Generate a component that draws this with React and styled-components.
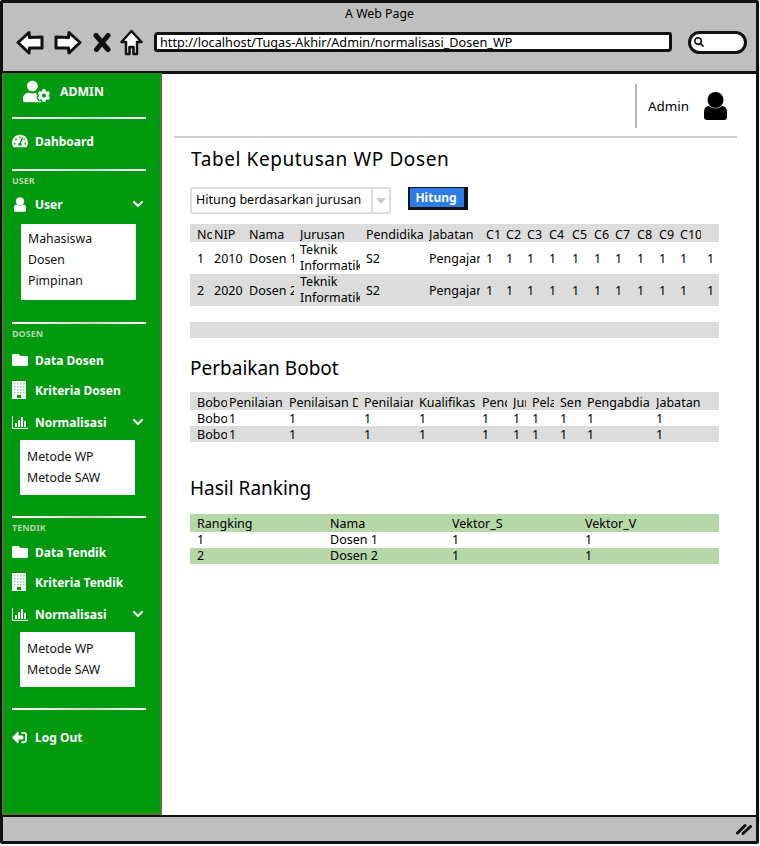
import React from 'react';
import styled, { createGlobalStyle } from 'styled-components';
import { FaUserCog, FaTachometerAlt, FaFolder, FaSignOutAlt, FaSearch } from 'react-icons/fa';
import { ChevronDown } from 'lucide-react';

const Global = createGlobalStyle`
  html, body { margin: 0; padding: 0; background: #fff; }
  body { font-family: "Noto Sans", "Liberation Sans", sans-serif; color: #000; }
  * { box-sizing: border-box; }
`;

const Frame = styled.div`
  width: 759px;
  height: 844px;
  border: 3px solid #111;
  border-radius: 2px;
  display: flex;
  flex-direction: column;
  background: #fff;
`;

const TopBar = styled.header`
  height: 71px;
  flex: none;
  background: #bfbfbf;
  border-bottom: 3px solid #111;
  display: flex;
  flex-direction: column;
  align-items: stretch;
`;

const PageTitle = styled.div`
  height: 21px;
  padding-top: 2px;
  text-align: center;
  font-size: 12.3px;
  line-height: 17px;
`;

const AddressRow = styled.div`
  display: flex;
  align-items: center;
  height: 36px;
  padding-left: 13px;
`;

const NavIcons = styled.div`
  display: flex;
  align-items: center;
  width: 138px;
  flex: none;
`;

const UrlBox = styled.div`
  width: 518px;
  height: 20px;
  border: 3px solid #111;
  border-radius: 4px 3px 4px 3px;
  background: #fff;
  font-size: 12.7px;
  line-height: 14px;
  padding-left: 3px;
  overflow: hidden;
  white-space: nowrap;
`;

const SearchBox = styled.div`
  width: 59px;
  height: 23px;
  margin-left: 16px;
  border: 3px solid #111;
  border-radius: 14px;
  background: #fff;
  display: flex;
  align-items: center;
  padding-left: 3px;
  font-size: 10px;
`;

const Body = styled.div`
  flex: 1;
  display: flex;
  min-height: 0;
`;

const Sidebar = styled.aside`
  width: 160px;
  height: 742px;
  margin: -1px 0 0 -1px;
  flex: none;
  background: #00990f;
  border: 2px solid #4a7d2a;
  border-top-color: #1c8a1c;
  display: flex;
  flex-direction: column;
`;

const Brand = styled.div`
  height: 42px;
  padding: 0 0 10px 19px;
  display: flex;
  align-items: center;
  gap: 10px;
  color: #fff;
  font-weight: 700;
  font-size: 12.3px;
`;

const Sep = styled.div`
  height: 2px;
  width: 134px;
  margin: ${p => p.$mt || 0}px 0 0 8px;
  background: linear-gradient(90deg, #fff, #cfd8cc 60%, #fff);
`;

const SideLabel = styled.div`
  height: 12px;
  margin: 4px 0 0 8px;
  font-size: 9px;
  line-height: 12px;
  font-weight: 700;
  color: #b6d7a8;
`;

const NavRow = styled.div`
  height: 30px;
  margin-top: ${p => p.$mt || 0}px;
  padding-left: 8px;
  display: flex;
  align-items: center;
  color: #fff;
  font-weight: 700;
  font-size: 12px;
  position: relative;
`;

const NavIcon = styled.span`
  width: 23px;
  flex: none;
  display: flex;
  align-items: center;
`;

const PersonSlot = styled.span`
  display: flex;
  margin-left: 2px;
`;

const Chevron = styled.span`
  position: absolute;
  left: 126px;
  top: 7px;
  display: flex;
`;

const SubMenu = styled.div`
  width: 115px;
  height: ${p => p.$h}px;
  margin: ${p => p.$mt}px 0 0 ${p => p.$ml}px;
  padding-top: ${p => p.$pt}px;
  background: #fff;
  border-radius: 1px;
`;

const SubItem = styled.div`
  height: 21px;
  padding-left: 7px;
  font-size: 12.3px;
  line-height: 21px;
  color: #111;
`;

const Main = styled.main`
  flex: 1;
  min-width: 0;
`;

const TopNav = styled.div`
  height: 61px;
  display: flex;
  justify-content: flex-end;
  align-items: center;
  padding: 2px 29px 0 0;
`;

const VLine = styled.div`
  width: 2px;
  height: 44px;
  margin-right: 11px;
  background: #b5b5b5;
`;

const AdminName = styled.span`
  font-size: 13.4px;
  margin-right: 15px;
`;

const Rule = styled.div`
  height: 2px;
  margin: 1px 19px 0 12px;
  background: #cfcfcf;
`;

const Content = styled.div`
  padding-left: 28px;
  width: 557px;
`;

const Heading = styled.h2`
  margin: ${p => p.$mt}px 0 0 ${p => p.$ml || 0}px;
  height: 24px;
  font-size: 19px;
  letter-spacing: ${p => p.$ls || 0}px;
  line-height: 24px;
  font-weight: 400;
`;

const Toolbar = styled.div`
  margin-top: 16px;
  display: flex;
  align-items: flex-start;
`;

const SelectBox = styled.div`
  width: 201px;
  height: 27px;
  border: 2px solid #ddd;
  border-radius: 2px;
  display: flex;
  font-size: 12.5px;
`;

const SelectText = styled.div`
  flex: 1;
  line-height: 21px;
  padding-left: 4px;
  border-right: 2px solid #ddd;
  white-space: nowrap;
  overflow: hidden;
`;

const SelectArrow = styled.div`
  width: 16px;
  display: flex;
  align-items: center;
  justify-content: center;
  &::after {
    content: '';
    border: 5px solid transparent;
    border-top: 6px solid #ccc;
    border-bottom: 0;
  }
`;

const HitungBtn = styled.button`
  margin-left: 17px;
  width: 60px;
  height: 23px;
  padding: 0 2px 0 0;
  background: #2b7ce4;
  color: #fff;
  border: 2px solid #111;
  border-top-width: 1px;
  border-right-width: 4px;
  border-bottom-width: 3px;
  font: 700 12px "Noto Sans", "Liberation Sans", sans-serif;
`;

const Table = styled.div`
  width: 529px;
  margin-top: ${p => p.$mt}px;
  font-size: 12.5px;
`;

const Row = styled.div`
  display: grid;
  grid-template-columns: ${p => p.$cols};
  padding: ${p => p.$pt || 0}px 0 0 7px;
  height: ${p => p.$h}px;
  align-items: center;
  background: ${p => p.$bg || 'transparent'};
`;

const Cell = styled.div`
  margin-right: ${p => p.$mr ?? 6}px;
  overflow: hidden;
  white-space: nowrap;
  line-height: ${p => p.$lh || 18}px;
  height: 16px;
`;

const WrapCell = styled(Cell)`
  white-space: normal;
  line-height: 16px;
  height: 32px;
  word-break: keep-all;
`;

const Clip = styled.span`
  display: block;
  overflow: hidden;
`;

const BottomBar = styled.footer`
  height: 26px;
  flex: none;
  margin-top: 2px;
  background: #bfbfbf;
  border-top: 2px solid #111;
  display: flex;
  justify-content: flex-end;
  align-items: center;
  padding-right: 4px;
`;

const BackIcon = ({ flip }) => (
  <svg width="29" height="25" viewBox="0 0 29 25" style={{ marginRight: flip ? 11 : 8, transform: flip ? 'scaleX(-1)' : 'none' }}>
    <path d="M2 12.5 L13 2.5 L13.5 7.5 L26 7 L26 18 L13.5 18 L13 23 Z" fill="#fff" stroke="#111" strokeWidth="3" strokeLinejoin="round" />
  </svg>
);

const CloseIcon = () => (
  <svg width="18" height="19" viewBox="0 0 18 19" style={{ marginRight: 9 }}>
    <path d="M3 2.5 L15 16.5 M15 2.5 L3.5 16.5" stroke="#111" strokeWidth="5" strokeLinecap="round" />
  </svg>
);

const HomeIcon = () => (
  <svg width="23" height="27" viewBox="0 0 23 27">
    <path d="M11.5 2 L21.5 13 L17 13 L17 25 L13.5 25 L13.5 18 L9.5 18 L9.5 25 L6 25 L6 13 L1.5 13 Z" fill="#fff" stroke="#111" strokeWidth="2.5" strokeLinejoin="round" />
  </svg>
);

const ResizeIcon = () => (
  <svg width="16" height="12" viewBox="0 0 16 12">
    <path d="M1.5 10 L9 2.5 M7 10.5 L14.5 3.5" stroke="#111" strokeWidth="3" strokeLinecap="round" />
  </svg>
);

const PersonIcon = ({ w, h, color }) => (
  <svg width={w} height={h} viewBox="0 0 23 28" fill={color}>
    <circle cx="11.5" cy="8" r="8" />
    <path d="M0 20 Q0 14.5 5 14 Q11.5 19 18 14 Q23 14.5 23 20 L23 25 Q23 28 20 28 L3 28 Q0 28 0 25 Z" />
  </svg>
);

const BuildingIcon = () => (
  <svg width="14" height="18" viewBox="0 0 14 18">
    <rect width="14" height="18" fill="#fff" />
    {[2, 5, 8, 11].map(x => [2, 5, 8, 11].map(y => (
      <rect key={`${x}-${y}`} x={x} y={y} width="1.6" height="1.6" fill="#9ed39f" />
    )))}
    <rect x="5" y="14" width="4" height="3" fill="#00990f" />
  </svg>
);

const BarsIcon = () => (
  <svg width="16" height="13" viewBox="0 0 16 13" fill="#fff">
    <rect x="0" y="0" width="1" height="13" />
    <rect x="0" y="12" width="16" height="1" />
    <rect x="3" y="7" width="2" height="4" />
    <rect x="6" y="4" width="2" height="7" />
    <rect x="9" y="1" width="2" height="10" />
    <rect x="12" y="5" width="2" height="6" />
  </svg>
);

const Side = ({ icon, children, mt, open }) => (
  <NavRow $mt={mt}>
    <NavIcon>{icon}</NavIcon>
    {children}
    {open && <Chevron><ChevronDown size={16} strokeWidth={3} color="#fff" /></Chevron>}
  </NavRow>
);

const cols1 = '17px 35px 51px 66px 63px 57px 20px 21px 22px 23px 22px 21px 22px 22px 21px 27px 1fr';
const cols2 = '32px 60px 75px 55px 63px 31px 19px 28px 27px 69px 1fr';
const cols3 = '133px 122px 133px 1fr';
const GRAY = '#dcdcdc';
const GREEN = '#b6d7a8';

const heads1 = ['No', 'NIP', 'Nama', 'Jurusan', 'Pendidikan', 'Jabatan', 'C1', 'C2', 'C3', 'C4', 'C5', 'C6', 'C7', 'C8', 'C9', 'C10', ''];
const heads2 = ['Bobot', 'Penilaian', 'Penilaisan Dosen', 'Penilaian', 'Kualifikasi', 'Pendidikan', 'Jurnal', 'Pelatihan', 'Seminar', 'Pengabdian', 'Jabatan'];
const heads3 = ['Rangking', 'Nama', 'Vektor_S', 'Vektor_V'];
const ones = Array.from({ length: 11 }, () => '1');

const DosenRow = ({ no, nip, nama, jabatan, bg }) => (
  <Row $cols={cols1} $h={32} $bg={bg}>
    <Cell $mr={2}>{no}</Cell>
    <Cell>{nip}</Cell>
    <Cell>{nama}</Cell>
    <WrapCell>Teknik<Clip>Informatika</Clip></WrapCell>
    <Cell>S2</Cell>
    <Cell>{jabatan}</Cell>
    {ones.map((v, i) => <Cell key={i} $mr={2}>{v}</Cell>)}
  </Row>
);

const BobotRow = ({ bg }) => (
  <Row $cols={cols2} $h={16} $bg={bg}>
    <Cell $mr={2}>Bobo</Cell>
    {Array.from({ length: 10 }, (_, i) => <Cell key={i}>1</Cell>)}
  </Row>
);

const RankRow = ({ cells, bg }) => (
  <Row $cols={cols3} $h={16} $bg={bg}>
    {cells.map((c, i) => <Cell key={i} $lh={16}>{c}</Cell>)}
  </Row>
);

export default function App() {
  return (
    <Frame>
      <Global />
      <TopBar>
        <PageTitle>A Web Page</PageTitle>
        <AddressRow>
          <NavIcons>
            <BackIcon />
            <BackIcon flip />
            <CloseIcon />
            <HomeIcon />
          </NavIcons>
          <UrlBox>http://localhost/Tugas-Akhir/Admin/normalisasi_Dosen_WP</UrlBox>
          <SearchBox><FaSearch /></SearchBox>
        </AddressRow>
      </TopBar>
      <Body>
        <Sidebar>
          <Brand><FaUserCog size={27} />ADMIN</Brand>
          <Sep />
          <Side mt={7} icon={<FaTachometerAlt size={16} />}>Dahboard</Side>
          <Sep $mt={13} />
          <SideLabel>USER</SideLabel>
          <Side mt={2} open icon={<PersonSlot><PersonIcon w={12} h={15} color="#fff" /></PersonSlot>}>User</Side>
          <SubMenu $h={76} $mt={5} $ml={17} $pt={4}>
            <SubItem>Mahasiswa</SubItem>
            <SubItem>Dosen</SubItem>
            <SubItem>Pimpinan</SubItem>
          </SubMenu>
          <Sep $mt={22} />
          <SideLabel>DOSEN</SideLabel>
          <Side mt={5} icon={<FaFolder size={16} />}>Data Dosen</Side>
          <Side icon={<BuildingIcon />}>Kriteria Dosen</Side>
          <Side mt={2} open icon={<BarsIcon />}>Normalisasi</Side>
          <SubMenu $h={55} $mt={3} $ml={16} $pt={6}>
            <SubItem>Metode WP</SubItem>
            <SubItem>Metode SAW</SubItem>
          </SubMenu>
          <Sep $mt={21} />
          <SideLabel>TENDIK</SideLabel>
          <Side mt={3} icon={<FaFolder size={16} />}>Data Tendik</Side>
          <Side icon={<BuildingIcon />}>Kriteria Tendik</Side>
          <Side mt={2} open icon={<BarsIcon />}>Normalisasi</Side>
          <SubMenu $h={55} $mt={3} $ml={16} $pt={6}>
            <SubItem>Metode WP</SubItem>
            <SubItem>Metode SAW</SubItem>
          </SubMenu>
          <Sep $mt={21} />
          <Side mt={12} icon={<FaSignOutAlt size={15} style={{ transform: 'scaleX(-1)' }} />}>Log Out</Side>
        </Sidebar>
        <Main>
          <TopNav>
            <VLine />
            <AdminName>Admin</AdminName>
            <PersonIcon w={23} h={28} color="#000" />
          </TopNav>
          <Rule />
          <Content>
            <Heading $mt={9} $ml={1} $ls={0.6}>Tabel Keputusan WP Dosen</Heading>
            <Toolbar>
              <SelectBox>
                <SelectText>Hitung berdasarkan jurusan</SelectText>
                <SelectArrow />
              </SelectBox>
              <HitungBtn>Hitung</HitungBtn>
            </Toolbar>
            <Table $mt={10}>
              <Row $cols={cols1} $h={18} $pt={2} $bg={GRAY}>
                {heads1.map((h, i) => <Cell key={i} $mr={i === 0 ? 2 : 6}>{h}</Cell>)}
              </Row>
              <DosenRow no="1" nip="2010" nama="Dosen 1" jabatan="Pengajar" />
              <DosenRow no="2" nip="2020" nama="Dosen 2" jabatan="Pengajar" bg={GRAY} />
              <Row $cols={cols1} $h={16} />
              <Row $cols={cols1} $h={16} $bg={GRAY} />
            </Table>
            <Heading $mt={18}>Perbaikan Bobot</Heading>
            <Table $mt={12}>
              <Row $cols={cols2} $h={18} $pt={2} $bg={GRAY}>
                {heads2.map((h, i) => <Cell key={i} $mr={i === 0 ? 2 : 6}>{h}</Cell>)}
              </Row>
              <BobotRow />
              <BobotRow bg={GRAY} />
            </Table>
            <Heading $mt={34}>Hasil Ranking</Heading>
            <Table $mt={14}>
              <Row $cols={cols3} $h={18} $pt={2} $bg={GREEN}>
                {heads3.map(h => <Cell key={h} $lh={16}>{h}</Cell>)}
              </Row>
              <RankRow cells={['1', 'Dosen 1', '1', '1']} />
              <RankRow cells={['2', 'Dosen 2', '1', '1']} bg={GREEN} />
            </Table>
          </Content>
        </Main>
      </Body>
      <BottomBar><ResizeIcon /></BottomBar>
    </Frame>
  );
}
